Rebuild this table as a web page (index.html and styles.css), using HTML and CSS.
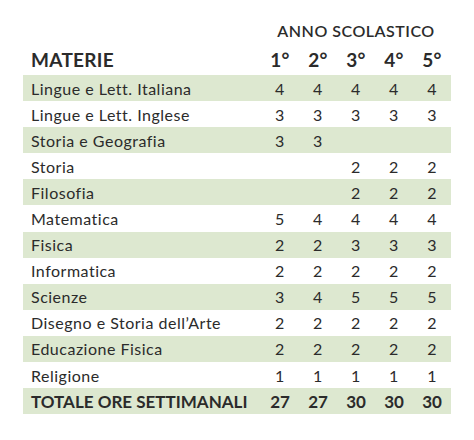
FILE: index.html
```html
<!DOCTYPE html>
<html lang="it">
<head>
<meta charset="utf-8">
<link rel="stylesheet" href="styles.css">
</head>
<body>
<div class="wrap">
<table class="orario">
  <colgroup>
    <col class="c-mat">
    <col class="c-num"><col class="c-num"><col class="c-num"><col class="c-num"><col class="c-num">
  </colgroup>
  <thead>
    <tr class="anno"><th></th><th colspan="5">ANNO SCOLASTICO</th></tr>
    <tr class="head"><th>MATERIE</th><th>1°</th><th>2°</th><th>3°</th><th>4°</th><th>5°</th></tr>
  </thead>
  <tbody>
    <tr class="g"><td>Lingue e Lett. Italiana</td><td>4</td><td>4</td><td>4</td><td>4</td><td>4</td></tr>
    <tr><td>Lingue e Lett. Inglese</td><td>3</td><td>3</td><td>3</td><td>3</td><td>3</td></tr>
    <tr class="g"><td>Storia e Geografia</td><td>3</td><td>3</td><td></td><td></td><td></td></tr>
    <tr><td>Storia</td><td></td><td></td><td>2</td><td>2</td><td>2</td></tr>
    <tr class="g"><td>Filosofia</td><td></td><td></td><td>2</td><td>2</td><td>2</td></tr>
    <tr><td>Matematica</td><td>5</td><td>4</td><td>4</td><td>4</td><td>4</td></tr>
    <tr class="g"><td>Fisica</td><td>2</td><td>2</td><td>3</td><td>3</td><td>3</td></tr>
    <tr><td>Informatica</td><td>2</td><td>2</td><td>2</td><td>2</td><td>2</td></tr>
    <tr class="g"><td>Scienze</td><td>3</td><td>4</td><td>5</td><td>5</td><td>5</td></tr>
    <tr><td>Disegno e Storia dell’Arte</td><td>2</td><td>2</td><td>2</td><td>2</td><td>2</td></tr>
    <tr class="g"><td>Educazione Fisica</td><td>2</td><td>2</td><td>2</td><td>2</td><td>2</td></tr>
    <tr><td>Religione</td><td>1</td><td>1</td><td>1</td><td>1</td><td>1</td></tr>
    <tr class="g tot"><td>TOTALE ORE SETTIMANALI</td><td>27</td><td>27</td><td>30</td><td>30</td><td>30</td></tr>
  </tbody>
</table>
</div>
</body>
</html>
```

FILE: styles.css
```css
html, body {
  margin: 0;
  padding: 0;
  background: #ffffff;
}
.wrap {
  padding: 16px 0 0 23px;
}
.orario {
  border-collapse: collapse;
  table-layout: fixed;
  width: 428px;
  font-family: "Lato", "Open Sans", sans-serif;
  font-variant-ligatures: none;
  color: #2b2b2b;
}
.c-mat { width: 238px; }
.c-num { width: 38px; }
.orario th, .orario td {
  padding: 0;
  text-align: center;
  white-space: nowrap;
}
.orario th:first-child, .orario td:first-child {
  text-align: left;
  padding-left: 8px;
}
.anno th {
  font-size: 16px;
  font-weight: 600;
  height: 28px;
  letter-spacing: 0.5px;
}
.head th {
  font-size: 19px;
  font-weight: 700;
  height: 31px;
  vertical-align: middle;
  letter-spacing: 0.3px;
}
.orario td {
  font-size: 16px;
  height: 26.1px;
  font-weight: 400;
  letter-spacing: 0.5px;
}
.g {
  background: #dde8d0;
}
.tot td {
  font-weight: 700;
  font-size: 17px;
  letter-spacing: 0;
}
```
